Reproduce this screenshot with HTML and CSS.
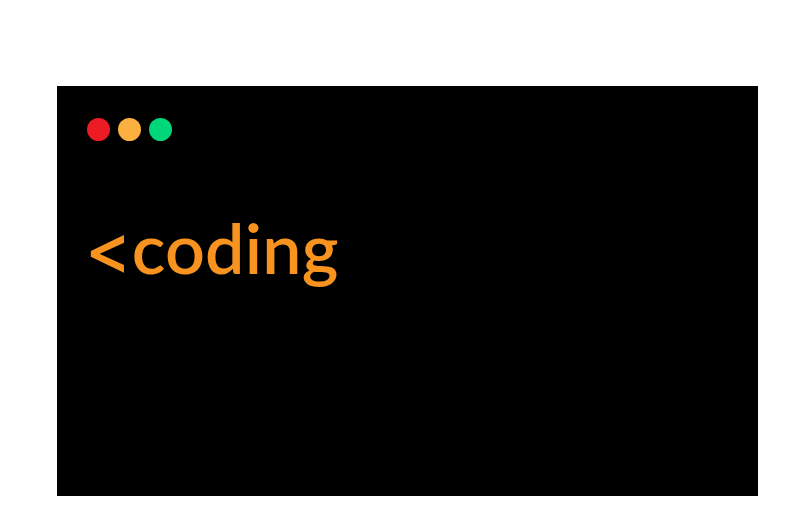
FILE: index.html
```html
<!DOCTYPE html>
<html>
<head>
<meta charset="utf-8">
<link rel="stylesheet" href="styles.css">
</head>
<body>
<div class="page">
  <div class="terminal">
    <div class="dots">
      <span class="dot red"></span>
      <span class="dot yellow"></span>
      <span class="dot green"></span>
    </div>
    <div class="code"><span class="lt">&lt;</span>coding</div>
  </div>
</div>
</body>
</html>
```
FILE: styles.css
```css
html, body {
  margin: 0;
  padding: 0;
  background: #fff;
}
.page {
  padding: 86px 0 0 57px;
}
.terminal {
  width: 701px;
  height: 410px;
  background: #000;
  box-sizing: border-box;
  padding: 32px 30px;
}
.dots {
  display: flex;
  gap: 8px;
}
.dot {
  width: 23px;
  height: 23px;
  border-radius: 50%;
  display: block;
}
.red { background: #ed1c24; }
.yellow { background: #fbb040; }
.green { background: #00d67a; }
.code {
  margin-top: 71px;
  margin-left: -2px;
  font-family: Lato, sans-serif;
  font-weight: 600;
  font-size: 70px;
  line-height: 1;
  letter-spacing: 0.2px;
  color: #f7931e;
}
.lt {
  font-family: Inter, sans-serif;
  font-weight: 500;
  letter-spacing: 0;
}
```
